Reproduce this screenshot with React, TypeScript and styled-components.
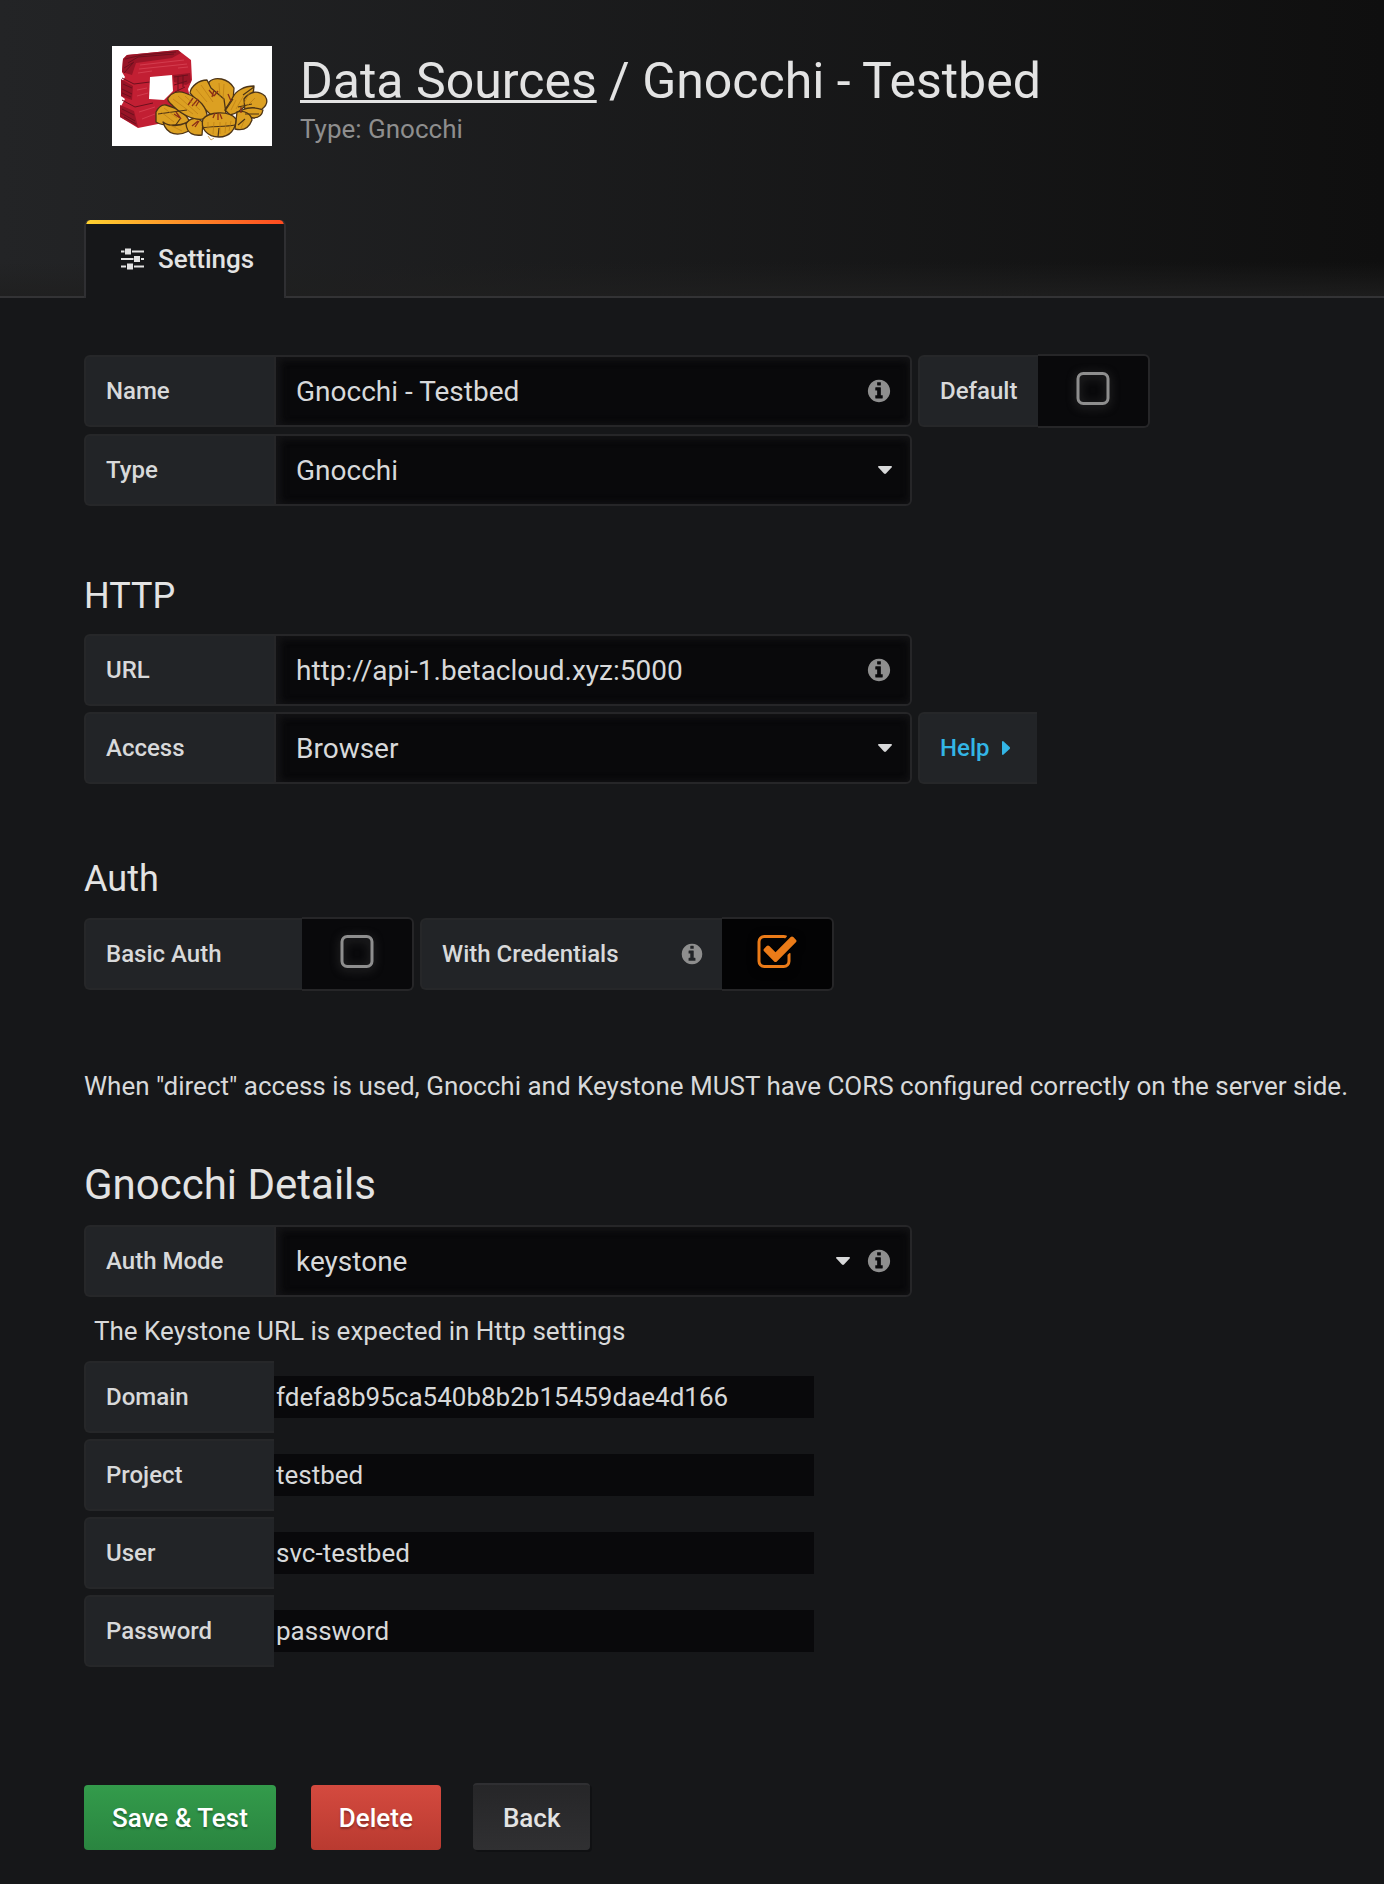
import React from "react";
import styled, { createGlobalStyle, css } from "styled-components";

const GlobalStyle = createGlobalStyle`
  *, *::before, *::after { box-sizing: border-box; }
  html { background: #161719; }
  body {
    margin: 0;
    background: #161719;
    color: #d8d9da;
    font-family: Roboto, "Liberation Sans", sans-serif;
    font-size: 26px;
    line-height: 40px;
  }
  button, input, select { font-family: inherit; color: inherit; margin: 0; }
`;

const Header = styled.header`
  display: flex;
  flex-direction: column;
  gap: 74px;
  padding-top: 46px;
  background:
    linear-gradient(rgba(31, 31, 31, 0), rgba(31, 31, 31, 0.9)) bottom / 100% 36px no-repeat,
    linear-gradient(90deg, #232426, #0f0f0f);
`;

const HeaderMain = styled.div`
  display: flex;
  align-items: flex-start;
  gap: 28px;
  padding: 0 84px 0 112px;
`;

const Logo = styled.svg`
  display: block;
  flex: none;
  width: 160px;
  height: 100px;
  background: #fff;
`;

const TitleBlock = styled.div`
  padding-top: 7px;
`;

const Title = styled.h1`
  margin: 0 0 4px;
  color: #e3e3e3;
  font-size: 50px;
  font-weight: 400;
  line-height: 56px;

  a {
    color: inherit;
    text-decoration: underline;
    text-decoration-thickness: 3px;
    text-underline-offset: 2px;
    text-decoration-skip-ink: none;
  }
`;

const SubTitle = styled.p`
  margin: 0;
  color: #8e8e8e;
  line-height: 32px;
`;

const Tabs = styled.nav`
  display: flex;
  height: 78px;

  &::before, &::after {
    content: "";
    width: 84px;
    border-bottom: 2px solid #333335;
  }
  &::after { flex: 1; }
`;

const Tab = styled.a`
  display: flex;
  align-items: center;
  gap: 14px;
  padding: 4px 30px 4px 34px;
  border: solid #2f2f32;
  border-width: 0 2px;
  border-radius: 6px 6px 0 0;
  background:
    linear-gradient(90deg, #ffd230 0%, #ff4a20 100%) top / 100% 4px no-repeat,
    #161719;
  color: #e3e3e3;
  font-weight: 500;
  text-decoration: none;
`;

const Main = styled.form`
  padding: 56px 34px 30px 84px;
`;

const Section = styled.section<{ $gap?: number }>`
  display: flex;
  flex-direction: column;
  gap: 6px;
  margin-top: ${(p) => p.$gap ?? 0}px;
`;

const Heading = styled.h3`
  margin: 0 0 12px;
  color: #e3e3e3;
  font-size: 36px;
  font-weight: 400;
  line-height: 40px;
`;

const PageHeading = styled(Heading).attrs({ as: "h2" })`
  margin-bottom: 10px;
  font-size: 42px;
  line-height: 48px;
`;

const Note = styled.p`
  margin: 75px 0 0;
`;

const Hint = styled.p`
  margin: 0;
  padding: 8px 10px 4px;
`;

const Row = styled.div`
  display: flex;
  align-items: center;
  gap: 6px;
`;

const Group = styled.div`
  display: flex;
  align-items: center;
`;

const labelBox = css`
  display: flex;
  align-items: center;
  justify-content: space-between;
  height: 72px;
  padding: 0 18px 0 20px;
  border: 2px solid #262729;
  border-right: 0;
  border-radius: 6px 0 0 6px;
  background: #222427;
  font-size: 24px;
  font-weight: 500;
`;

const Label = styled.label<{ $width?: number }>`
  ${labelBox}
  width: ${(p) => p.$width ?? 190}px;
`;

const HelpButton = styled.button`
  ${labelBox}
  justify-content: flex-start;
  gap: 12px;
  width: 119px;
  color: #33b5e5;
  cursor: pointer;
`;

const Field = styled.div`
  display: grid;
  align-items: center;
  width: 638px;

  > * { grid-area: 1 / 1; }
`;

const control = css`
  width: 100%;
  height: 72px;
  padding: 0 84px 0 20px;
  border: 2px solid #262628;
  border-radius: 0 6px 6px 0;
  background: #09090b;
  box-shadow: inset 0 2px 8px #141416, inset 4px 0 8px #141416;
  font-size: 28px;
  outline: none;
`;

const TextInput = styled.input`
  ${control}
`;

const Select = styled.select`
  ${control}
  appearance: none;
`;

const Adornments = styled.span`
  display: flex;
  align-items: center;
  justify-self: end;
  gap: 16px;
  padding-right: 20px;
  pointer-events: none;
`;

const PlainInput = styled.input`
  width: 540px;
  height: 42px;
  padding: 0 2px;
  border: 0;
  background: #09090b;
  font-size: 26px;
  outline: none;
`;

const SwitchCell = styled.label<{ $on?: boolean }>`
  display: grid;
  place-items: center;
  width: 112px;
  height: 74px;
  padding-bottom: 2px;
  border: 2px solid #262628;
  border-left: 0;
  border-radius: 0 6px 6px 0;
  background: ${(p) => (p.$on ? "#030304" : "#09090b")};
  color: ${(p) => (p.$on ? "#eb7b18" : "#8e8e8e")};
  cursor: pointer;

  > * { grid-area: 1 / 1; }
  svg { filter: drop-shadow(0 2px 5px ${(p) => (p.$on ? "#000" : "#3a3a3a")}); }
`;

const HiddenCheckbox = styled.input`
  width: 42px;
  height: 42px;
  opacity: 0;
`;

const Glyph = styled.svg<{ $size: number }>`
  display: block;
  flex: none;
  width: ${(p) => p.$size}px;
  height: ${(p) => p.$size}px;
  fill: currentColor;
`;

const InfoGlyph = styled(Glyph)`
  color: #8e8e8e;
`;

const Actions = styled.div`
  display: flex;
  align-items: flex-end;
  margin-top: 116px;
`;

const Button = styled.button<{ $from: string; $to: string }>`
  height: 65px;
  margin-right: 35px;
  padding: 0 28px;
  border: 0;
  border-radius: 4px;
  background: linear-gradient(${(p) => p.$from}, ${(p) => p.$to});
  color: #fff;
  font-size: 26px;
  font-weight: 500;
  text-shadow: 0 2px 2px rgba(0, 0, 0, 0.3);
  cursor: pointer;
`;

const BackLink = styled.a`
  height: 67px;
  padding: 0 30px;
  margin-left: -3px;
  border-top: 2px solid #2f2f32;
  border-radius: 4px;
  background: linear-gradient(#262628, #303032);
  box-shadow: 2px 2px 0 #101113;
  color: #e3e3e3;
  font-weight: 500;
  line-height: 66px;
  text-decoration: none;
`;

const INFO_PATH =
  "M1152 1376v-160q0-14-9-23t-23-9h-96v-512q0-14-9-23t-23-9h-320q-14 0-23 9t-9 23v160q0 14 9 23t23 9h96v320h-96q-14 0-23 9t-9 23v160q0 14 9 23t23 9h448q14 0 23-9t9-23zm-128-896v-160q0-14-9-23t-23-9h-192q-14 0-23 9t-9 23v160q0 14 9 23t23 9h192q14 0 23-9t9-23zm640 416q0 209-103 385.5t-279.5 279.5-385.5 103-385.5-103-279.5-279.5-103-385.5 103-385.5 279.5-279.5 385.5-103 385.5 103 279.5 279.5 103 385.5z";
const SQUARE_PATH =
  "M1312 256h-832q-66 0-113 47t-47 113v832q0 66 47 113t113 47h832q66 0 113-47t47-113v-832q0-66-47-113t-113-47zm288 160v832q0 119-84.5 203.5t-203.5 84.5h-832q-119 0-203.5-84.5t-84.5-203.5v-832q0-119 84.5-203.5t203.5-84.5h832q119 0 203.5 84.5t84.5 203.5z";
const CHECK_PATH =
  "M1472 930v318q0 119-84.5 203.5t-203.5 84.5h-832q-119 0-203.5-84.5t-84.5-203.5v-832q0-119 84.5-203.5t203.5-84.5h832q63 0 117 25 15 7 18 23 3 17-9 29l-49 49q-10 10-23 10-3 0-9-2-23-6-45-6h-832q-66 0-113 47t-47 113v832q0 66 47 113t113 47h832q66 0 113-47t47-113v-254q0-13 9-22l64-64q10-10 23-10 6 0 12 3 20 8 20 29zm231-489l-814 814q-24 24-57 24t-57-24l-430-430q-24-24-24-57t24-57l110-110q24-24 57-24t57 24l263 263 647-647q24-24 57-24t57 24l110 110q24 24 24 57t-24 57z";

const Info = ({ size = 26 }: { size?: number }) => (
  <InfoGlyph $size={size} viewBox="0 0 1792 1792" aria-hidden="true">
    <path d={INFO_PATH} />
  </InfoGlyph>
);

const CaretDown = () => (
  <Glyph $size={14} viewBox="0 0 14 14" aria-hidden="true">
    <path d="M1 3h12q1.6.4.6 1.6L8 10.6q-1 .9-2 0L.4 4.6Q-.6 3.400 1 3z" />
  </Glyph>
);

const CaretRight = () => (
  <Glyph $size={14} viewBox="0 0 14 14" aria-hidden="true">
    <path d="M0 1q.3-1.600 1.600-.6l6 5.600q.9 1 0 2l-6 5.600Q.3 14.600 0 13z" />
  </Glyph>
);

const SlidersIcon = () => (
  <Glyph $size={24} viewBox="0 0 24 24" aria-hidden="true">
    <path d="M1 3.500h3.500v2H1zM12 3.500h12v2H12zM5 1.500h6v6H5zM1 11h12.500v2H1zM21 11h3v2h-3zM14 9h6v6h-6zM1 18.500h5v2H1zM14 18.500h10v2H14zM7 16.500h6v6H7z" />
  </Glyph>
);

const GnocchiLogo = () => (
  <Logo viewBox="0 0 160 100" role="img" aria-label="Gnocchi logo">
    <path fill="#c21f33" d="M11 13 15 9 66 4 79 14 80 34 76 43 79 55 46 78 26 82 8 71 8 62 13 53 9 50 9 38 13 31 10 26z" />
    <path fill="#981426" d="M11 13 15 9 66 4 69 7 60 12 24 17 20 29 10 26zM9 33 21 40 20 54 9 50zM8 59 22 65 26 81 8 71zM61 29l17-2 1 9-5 3-12-3z" />
    <path fill="none" stroke="#6d101d" strokeWidth="1" d="M13 13 30 9l34-3M16 17l10-6 36-3M12 22l10-6M12 27l9-10M10 32l12 6 16-2M10 54l13 7 18-4M62 31l14-2M62 39l13-4M63 46l10-5M11 38l9 4M10 43l10 5M10 47l9 4M10 63l12 6M9 67l14 8M12 71l12 7M66 30v14M71 29v12" />
    <path fill="none" stroke="#e05263" strokeWidth=".8" opacity=".7" d="M28 19l44-5M27 23l48-5M26 27l14-2M25 44l10-2M25 50l11-3M27 66l16-5M30 73l13-5M66 22l10-1" />
    <path fill="#fff" d="M38 31 60 29 61 45 52 54 37 53z" />
    <g fill="#dca022" stroke="#4c3315" strokeWidth="1.300" strokeLinejoin="round">
      <path d="M97 36c6-6 19-4 25 6l-1 13-12 12-15-9z" />
      <path d="M78 47c1-7 9-13 17-13l4 8 13 11 2 15-14 2-12-12z" />
      <path d="M121 51c3-6 11-11 21-11 0 12-11 26-24 29l-5-5z" />
      <path d="M132 53c6-8 14-9 21-3 4 6 1 10-3 13-7 2-14 1-17 2z" />
      <path d="M130 64c7-3 14-3 21 0-1 6-5 8-10 8l-12-3z" />
      <path d="M125 66c8-2 14 2 15 8-3 8-9 11-17 9z" />
      <path d="M44 66c3-6 6-8 10-7 11 3 21 9 23 16-7 5-25 6-33 1z" />
      <path d="M51 76c6 5 17 4 23 1l3 8c-10 5-22 5-26-9z" />
      <path d="M74 78c4-7 11-7 17-2l-1 13c-8 1-15-1-16-11z" />
      <path d="M56 52c3-5 10-8 17-5 15 5 23 16 22 25-10 4-24-2-34-12-4-4-6-5-5-8z" />
      <path d="M91 73c5-7 26-9 33 0 0 10-6 18-17 18-12 0-19-9-16-18z" />
    </g>
    <path fill="none" stroke="#4c3315" strokeWidth="1.200" d="M90 82c9-2 23-1 33-3M106 91l1-9M63 80l5-7M46 68l29-4M121 53l-8 12M133 73l-7 6M131 49l11-8M126 61l14-3M133 68h14" />
    <path fill="none" stroke="#8c2f17" strokeWidth="1.300" d="M76 59l5-7M80 60l6-7M84 60l3-5M97 44l5 6M102 44l-2 7M106 45l-4 5M116 48l3 7M62 68l6 4M64 66l5 7M101 72l2-5M106 74v-7M110 73l-2-5M80 80l6-5M83 81l4-6M129 61v6" />
    <path fill="none" stroke="#b87913" strokeWidth=".8" opacity=".8" d="M61 53l20 15M66 50l20 18M73 50l15 14M84 43l11 13M89 39l12 17M107 37l1 14M112 38l-1 16M124 54l-5 10M132 49l-8 14M138 46l-7 13M143 52l-8 8M52 62l13 10M49 66l13 10M58 79l12 6M96 76v7M102 76l-1 12M108 76v12M114 76l-1 11M119 75l-2 10M132 75l-3 7M96 90l3 4 3-2" />
  </Logo>
);

interface SwitchProps {
  id: string;
  label: string;
  labelWidth: number;
  checked?: boolean;
  info?: boolean;
}

function Switch({ id, label, labelWidth, checked = false, info }: SwitchProps) {
  const [on, setOn] = React.useState(checked);
  return (
    <Group>
      <Label htmlFor={id} $width={labelWidth}>
        {label}
        {info && <Info size={24} />}
      </Label>
      <SwitchCell $on={on}>
        <HiddenCheckbox
          id={id}
          type="checkbox"
          aria-label={label}
          checked={on}
          onChange={(e) => setOn(e.target.checked)}
        />
        <Glyph $size={42} viewBox="0 0 1792 1792" aria-hidden="true">
          <path d={on ? CHECK_PATH : SQUARE_PATH} />
        </Glyph>
      </SwitchCell>
    </Group>
  );
}

function TextField({ id, label, value }: { id: string; label: string; value: string }) {
  return (
    <Group>
      <Label htmlFor={id}>{label}</Label>
      <Field>
        <TextInput id={id} type="text" defaultValue={value} />
        <Adornments>
          <Info />
        </Adornments>
      </Field>
    </Group>
  );
}

interface SelectFieldProps {
  id: string;
  label: string;
  options: string[];
  info?: boolean;
}

function SelectField({ id, label, options, info }: SelectFieldProps) {
  return (
    <Group>
      <Label htmlFor={id}>{label}</Label>
      <Field>
        <Select id={id} defaultValue={options[0]}>
          {options.map((o) => (
            <option key={o}>{o}</option>
          ))}
        </Select>
        <Adornments>
          <CaretDown />
          {info && <Info />}
        </Adornments>
      </Field>
    </Group>
  );
}

const credentials = [
  { id: "domain", label: "Domain", value: "fdefa8b95ca540b8b2b15459dae4d166" },
  { id: "project", label: "Project", value: "testbed" },
  { id: "user", label: "User", value: "svc-testbed" },
  { id: "password", label: "Password", value: "password" },
];

export default function App() {
  return (
    <>
      <GlobalStyle />
      <Header>
        <HeaderMain>
          <GnocchiLogo />
          <TitleBlock>
            <Title>
              <a href="#datasources">Data Sources</a> / Gnocchi - Testbed
            </Title>
            <SubTitle>Type: Gnocchi</SubTitle>
          </TitleBlock>
        </HeaderMain>
        <Tabs>
          <Tab href="#settings">
            <SlidersIcon />
            Settings
          </Tab>
        </Tabs>
      </Header>

      <Main onSubmit={(e) => e.preventDefault()}>
        <Section>
          <Row>
            <TextField id="name" label="Name" value="Gnocchi - Testbed" />
            <Switch id="default" label="Default" labelWidth={120} />
          </Row>
          <SelectField id="type" label="Type" options={["Gnocchi"]} />
        </Section>

        <Section $gap={70}>
          <Heading>HTTP</Heading>
          <TextField id="url" label="URL" value="http://api-1.betacloud.xyz:5000" />
          <Row>
            <SelectField id="access" label="Access" options={["Browser"]} />
            <HelpButton type="button">
              Help <CaretRight />
            </HelpButton>
          </Row>
        </Section>

        <Section $gap={75}>
          <Heading>Auth</Heading>
          <Row>
            <Switch id="basic-auth" label="Basic Auth" labelWidth={218} />
            <Switch id="with-credentials" label="With Credentials" labelWidth={302} info checked />
          </Row>
        </Section>

        <Note>
          When "direct" access is used, Gnocchi and Keystone MUST have CORS configured correctly on
          the server side.
        </Note>

        <Section $gap={55}>
          <PageHeading>Gnocchi Details</PageHeading>
          <SelectField id="auth-mode" label="Auth Mode" options={["keystone"]} info />
          <Hint>The Keystone URL is expected in Http settings</Hint>
          {credentials.map((c) => (
            <Group key={c.id}>
              <Label htmlFor={c.id}>{c.label}</Label>
              <PlainInput id={c.id} type="text" defaultValue={c.value} />
            </Group>
          ))}
        </Section>

        <Actions>
          <Button type="submit" $from="#339b4b" $to="#2a8540">
            Save &amp; Test
          </Button>
          <Button type="button" $from="#d44a3f" $to="#b93a30">
            Delete
          </Button>
          <BackLink href="#back">Back</BackLink>
        </Actions>
      </Main>
    </>
  );
}
